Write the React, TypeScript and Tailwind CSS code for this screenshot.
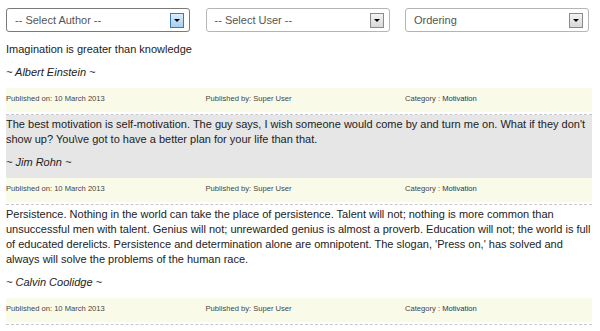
import { ReactNode } from "react";

type Quote = { text: string; author: string; hover?: boolean };

const quotes: Quote[] = [
  { text: "Imagination is greater than knowledge", author: "Albert Einstein" },
  {
    text: "The best motivation is self-motivation. The guy says, I wish someone would come by and turn me on. What if they don't show up? You\\ve got to have a better plan for your life than that.",
    author: "Jim Rohn",
    hover: true,
  },
  {
    text: "Persistence. Nothing in the world can take the place of persistence. Talent will not; nothing is more common than unsuccessful men with talent. Genius will not; unrewarded genius is almost a proverb. Education will not; the world is full of educated derelicts. Persistence and determination alone are omnipotent. The slogan, 'Press on,' has solved and always will solve the problems of the human race.",
    author: "Calvin Coolidge",
  },
];

function Select({ label, focused }: { label: string; focused?: boolean }) {
  return (
    <div
      className={`flex h-6 w-[184px] items-center justify-between rounded-[3px] border bg-white pl-2 pr-[5px] ${
        focused ? "border-[#7a7a7a]" : "border-[#b5b5b5]"
      }`}
    >
      <span className="text-[11px] text-[#555]">{label}</span>
      <span
        className={`flex h-[15px] w-[14px] items-center justify-center border ${
          focused ? "border-[#3d7bad] bg-gradient-to-b from-[#dcecfc] to-[#a7cdf0]" : "border-[#8a8a8a] bg-gradient-to-b from-[#f4f4f4] to-[#d8d8d8]"
        }`}
      >
        <span className="h-0 w-0 border-x-[3px] border-t-[3px] border-x-transparent border-t-black" />
      </span>
    </div>
  );
}

function Col({ children }: { children: ReactNode }) {
  return <div className="w-[199.5px] shrink-0">{children}</div>;
}

function Item({ q }: { q: Quote }) {
  return (
    <div>
      <div className={`pt-[2px] pb-2 ${q.hover ? "bg-[#e6e6e6]" : ""}`}>
        <p>{q.text}</p>
        <p className="mt-2 italic">~ {q.author} ~</p>
      </div>
      <div className="flex h-6 bg-[#fafae9] pt-[6px] text-[7.6px] leading-[9px] text-[#444]">
        <Col>Published on: 10 March 2013</Col>
        <Col>Published by: Super User</Col>
        <Col>
          Category : <span className="text-[#1f3350]">Motivation</span>
        </Col>
      </div>
      <div className="mt-0.5 border-b border-dashed border-[#c8c8c8]" />
    </div>
  );
}

export default function App() {
  return (
    <div className="h-[331px] w-[600px] overflow-hidden bg-white font-['Liberation_Sans',Arial,sans-serif] text-[11px] leading-[15px] text-[#222]">
      <div className="w-[586px] pl-[6px] box-content">
        <div className="flex pt-2 pb-2">
          <Col>
            <Select label="-- Select Author --" focused />
          </Col>
          <Col>
            <Select label="-- Select User --" />
          </Col>
          <Col>
            <Select label="Ordering" />
          </Col>
        </div>
        {quotes.map((q) => (
          <Item key={q.author} q={q} />
        ))}
      </div>
    </div>
  );
}
